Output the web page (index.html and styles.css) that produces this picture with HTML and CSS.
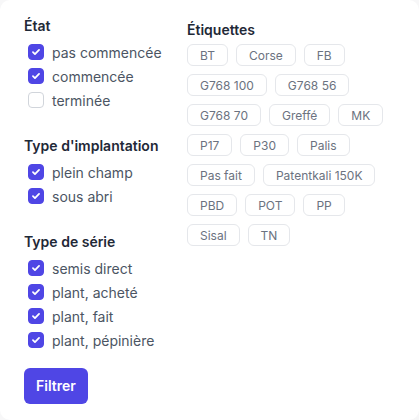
FILE: index.html
```html
<!DOCTYPE html>
<html lang="fr">
<head>
<meta charset="utf-8">
<title>Filtres</title>
<link rel="stylesheet" href="styles.css">
</head>
<body>
<form class="panel">
  <div class="col-left">
    <fieldset class="group">
      <legend class="heading">État</legend>
      <label class="opt"><span class="box on"><svg viewBox="0 0 16 16"><path d="M4.5 8.2l2.3 2.3 4.7-4.9"/></svg></span>pas commencée</label>
      <label class="opt"><span class="box on"><svg viewBox="0 0 16 16"><path d="M4.5 8.2l2.3 2.3 4.7-4.9"/></svg></span>commencée</label>
      <label class="opt"><span class="box"></span>terminée</label>
    </fieldset>
    <fieldset class="group">
      <legend class="heading">Type d'implantation</legend>
      <label class="opt"><span class="box on"><svg viewBox="0 0 16 16"><path d="M4.5 8.2l2.3 2.3 4.7-4.9"/></svg></span>plein champ</label>
      <label class="opt"><span class="box on"><svg viewBox="0 0 16 16"><path d="M4.5 8.2l2.3 2.3 4.7-4.9"/></svg></span>sous abri</label>
    </fieldset>
    <fieldset class="group">
      <legend class="heading">Type de série</legend>
      <label class="opt"><span class="box on"><svg viewBox="0 0 16 16"><path d="M4.5 8.2l2.3 2.3 4.7-4.9"/></svg></span>semis direct</label>
      <label class="opt"><span class="box on"><svg viewBox="0 0 16 16"><path d="M4.5 8.2l2.3 2.3 4.7-4.9"/></svg></span>plant, acheté</label>
      <label class="opt"><span class="box on"><svg viewBox="0 0 16 16"><path d="M4.5 8.2l2.3 2.3 4.7-4.9"/></svg></span>plant, fait</label>
      <label class="opt"><span class="box on"><svg viewBox="0 0 16 16"><path d="M4.5 8.2l2.3 2.3 4.7-4.9"/></svg></span>plant, pépinière</label>
    </fieldset>
    <button type="button" class="btn">Filtrer</button>
  </div>
  <div class="col-right">
    <div class="heading tags-heading">Étiquettes</div>
    <div class="tags">
      <span class="tag">BT</span>
      <span class="tag">Corse</span>
      <span class="tag">FB</span>
      <span class="tag">G768 100</span>
      <span class="tag">G768 56</span>
      <span class="tag">G768 70</span>
      <span class="tag">Greffé</span>
      <span class="tag">MK</span>
      <span class="tag">P17</span>
      <span class="tag">P30</span>
      <span class="tag">Palis</span>
      <span class="tag">Pas fait</span>
      <span class="tag">Patentkali 150K</span>
      <span class="tag">PBD</span>
      <span class="tag">POT</span>
      <span class="tag">PP</span>
      <span class="tag">Sisal</span>
      <span class="tag">TN</span>
    </div>
  </div>
</form>
</body>
</html>
```

FILE: styles.css
```css
* { box-sizing: border-box; }
html, body { margin: 0; padding: 0; background: #f7f7f8; }
body {
  font-family: Inter, "Noto Sans", "Liberation Sans", sans-serif;
  color: #1f2937;
}
.panel {
  width: 419px;
  min-height: 420px;
  background: #fff;
  border-radius: 10px;
  padding: 16px 24px 16px 24px;
  display: grid;
  grid-template-columns: 147px 1fr;
  column-gap: 16px;
  align-items: start;
}
.col-left { display: flex; flex-direction: column; }
.group {
  border: 0;
  margin: 0 0 24px 0;
  padding: 0;
  min-width: 0;
  display: flex;
  flex-direction: column;
}
.group:last-of-type { margin-bottom: 16px; }
.heading {
  font-size: 14px;
  line-height: 20px;
  font-weight: 600;
  color: #1f2937;
  padding: 0;
  margin-bottom: 4px;
}
legend.heading { float: left; width: 100%; }
.opt {
  display: flex;
  align-items: center;
  gap: 8px;
  height: 24px;
  padding-left: 4px;
  font-size: 14px;
  color: #4b5563;
}
.box {
  width: 16px;
  height: 16px;
  border-radius: 4px;
  border: 1px solid #d1d5db;
  background: #fff;
  flex: none;
  display: flex;
  align-items: center;
  justify-content: center;
}
.box.on { background: #4f46e5; border-color: #4f46e5; }
.box svg { width: 16px; height: 16px; }
.box path { fill: none; stroke: #fff; stroke-width: 2; stroke-linecap: round; stroke-linejoin: round; }
.btn {
  align-self: flex-start;
  background: #4f46e5;
  color: #fff;
  border: 0;
  border-radius: 6px;
  font-family: inherit;
  font-size: 14px;
  font-weight: 600;
  line-height: 20px;
  padding: 8px 12px;
}
.col-right { padding-top: 4px; }
.tags-heading { margin-bottom: 4px; }
.tags {
  display: flex;
  flex-wrap: wrap;
  gap: 8px;
}
.tag {
  display: inline-flex;
  align-items: center;
  height: 22px;
  padding: 0 12px;
  border: 1px solid #e5e7eb;
  border-radius: 6px;
  font-size: 12px;
  color: #6b7280;
  background: #fff;
}
```
